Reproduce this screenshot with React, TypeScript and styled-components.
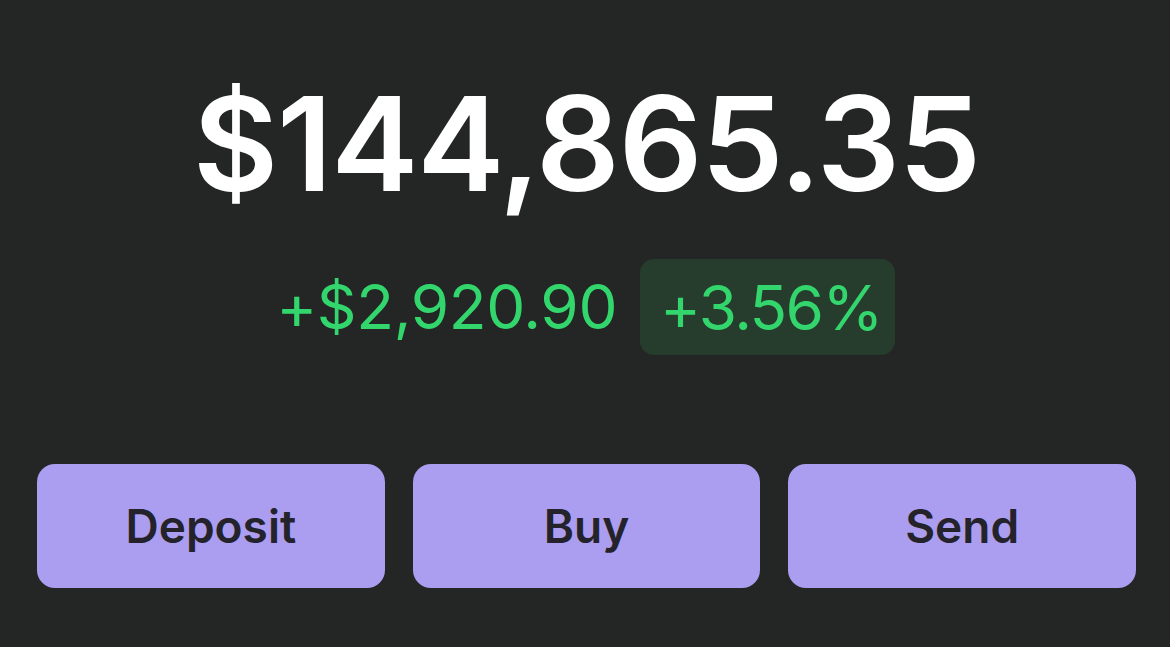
import React from "react";
import styled, { createGlobalStyle } from "styled-components";

const Global = createGlobalStyle`
  html, body { margin: 0; padding: 0; background: #232624; }
  body { font-family: Inter, "Noto Sans", sans-serif; -webkit-font-smoothing: antialiased; }
`;

const Screen = styled.main`
  width: 1170px;
  height: 647px;
  box-sizing: border-box;
  background: #232624;
  display: flex;
  flex-direction: column;
  align-items: center;
  padding: 64px 34px 0 37px;
`;

const Balance = styled.h1`
  margin: 0;
  font-size: 131px;
  font-weight: 600;
  letter-spacing: -1.2px;
  line-height: 160px;
  color: #ffffff;
`;

const ChangeRow = styled.div`
  display: flex;
  align-items: center;
  gap: 23px;
  margin-top: 35px;
  padding-right: 2px;
`;

const ChangeValue = styled.span`
  font-size: 62px;
  font-weight: 400;
  color: #33d56d;
  letter-spacing: -0.4px;
  line-height: 96px;
`;

const ChangePill = styled.span`
  display: inline-flex;
  align-items: center;
  height: 96px;
  padding: 0 13px 0 20px;
  border-radius: 14px;
  background: #263c2c;
  font-size: 62px;
  font-weight: 400;
  color: #33d56d;
  letter-spacing: -1.6px;
`;

const Actions = styled.div`
  align-self: stretch;
  display: grid;
  grid-template-columns: repeat(3, 1fr);
  gap: 28px;
  margin-top: 109px;
`;

const ActionButton = styled.button`
  height: 124px;
  border: none;
  border-radius: 18px;
  background: #ab9ef0;
  color: #24232b;
  font-family: Inter, "Noto Sans", sans-serif;
  font-size: 46px;
  font-weight: 600;
  cursor: pointer;
`;

export default function App() {
  return (
    <>
      <Global />
      <Screen>
        <Balance>$144,865.35</Balance>
        <ChangeRow>
          <ChangeValue>+$2,920.90</ChangeValue>
          <ChangePill>+3.56%</ChangePill>
        </ChangeRow>
        <Actions>
          {["Deposit", "Buy", "Send"].map((label) => (
            <ActionButton key={label}>{label}</ActionButton>
          ))}
        </Actions>
      </Screen>
    </>
  );
}
